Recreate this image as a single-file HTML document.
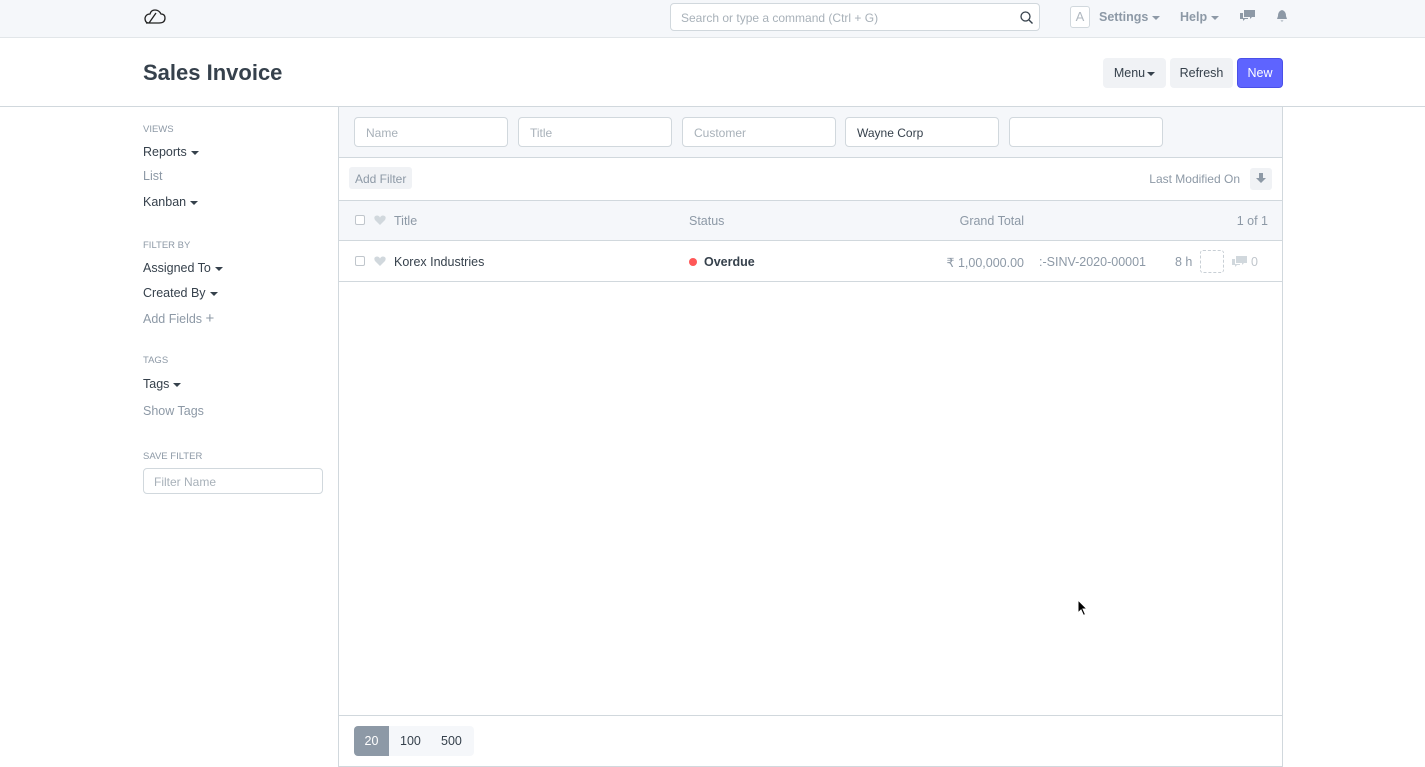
<!DOCTYPE html>
<html><head><meta charset="utf-8"><style>
*{box-sizing:border-box;margin:0;padding:0}
body{width:1425px;height:767px;overflow:hidden;background:#fff;font-family:"Liberation Sans",sans-serif;font-size:12.5px;color:#36414c;position:relative}
.abs{position:absolute;white-space:nowrap}
.nav{top:0;left:0;width:1425px;height:38px;background:#f5f7fa;border-bottom:1px solid #e2e6e9}
.search{left:670px;top:3px;width:370px;height:28px;border:1px solid #d1d8dd;border-radius:4px;background:#fff;font-size:12px;color:#a8b1b9;padding:7px 10px}
.gray{color:#8d99a6}
.caret{display:inline-block;width:0;height:0;border-left:4px solid transparent;border-right:4px solid transparent;border-top:4px solid currentColor;vertical-align:middle;margin-left:4px}
.btn{top:58px;height:30px;border-radius:4px;background:#f0f2f5;font-size:12.5px;padding:8px 0;text-align:center;color:#36414c}
.side{left:143px;font-size:12.5px}
.lbl{font-size:9.5px;color:#8d99a6;left:143px}
.main{left:338px;top:107px;width:945px;height:660px;border:1px solid #d1d8dd;border-top:none}
.inp{top:117px;width:154px;height:30px;border:1px solid #d1d8dd;border-radius:4px;background:#fff;font-size:12px;color:#a8b1b9;padding:8px 11px}
.hline{height:1px;background:#d1d8dd;left:339px;width:943px}
.cb{width:10px;height:10px;border:1px solid #c0c6cc;border-radius:2px}
</style></head><body>
<div class="abs nav"></div>
<svg class="abs" style="left:143px;top:8px" width="25" height="18" viewBox="0 0 25 18"><path d="M3 15 L16 15 Q22 15 22 10 Q22 6 18 6 Q16 2 12 2 Q8 2 7 6 Q3 6 2 10 Q2 15 6 15 M6 15 L13 5" fill="none" stroke="#222" stroke-width="1.3"/></svg>
<div class="abs search">Search or type a command (Ctrl + G)</div>
<svg class="abs" style="left:1020px;top:11px" width="13" height="13"><circle cx="5.5" cy="5.5" r="4.5" fill="none" stroke="#36414c" stroke-width="1.3"/><path d="M9 9 L12.5 12.5" stroke="#36414c" stroke-width="1.4"/></svg>
<div class="abs" style="left:1070px;top:6px;width:20px;height:22px;border:1px solid #d1d8dd;border-radius:3px;background:#fff;color:#b0b8c0;font-size:13px;text-align:center;line-height:20px">A</div>
<div class="abs gray" style="left:1099px;top:10px;font-weight:bold;font-size:12.5px">Settings<span class="caret"></span></div>
<div class="abs gray" style="left:1180px;top:10px;font-weight:bold;font-size:12.5px">Help<span class="caret"></span></div>
<svg class="abs" style="left:1240px;top:10px" width="16" height="13"><path d="M4 0h11v7h-3l-2 2V7H4z M0 3h3v5h5v1H5l-2 2V9H0z" fill="#8d99a6"/></svg>
<svg class="abs" style="left:1276px;top:9px" width="12" height="14"><path d="M6 1 Q2 2 2 7 L1 10 H11 L10 7 Q10 2 6 1z M4.5 11.5 Q6 13.5 7.5 11.5z" fill="#8d99a6"/></svg>

<div class="abs" style="left:143px;top:60px;font-size:22px;font-weight:bold;color:#36414c">Sales Invoice</div>
<div class="abs btn" style="left:1103px;width:63px">Menu<span class="caret" style="margin-left:2px"></span></div>
<div class="abs btn" style="left:1170px;width:63px">Refresh</div>
<div class="abs btn" style="left:1237px;width:46px;background:#5e64ff;color:#fff;border:1px solid #4a50e8;padding-top:7px">New</div>
<div class="abs" style="left:0;top:106px;width:1425px;height:1px;background:#d1d8dd"></div>

<div class="abs lbl" style="top:124px">VIEWS</div>
<div class="abs side" style="top:145px">Reports<span class="caret"></span></div>
<div class="abs side gray" style="top:169px">List</div>
<div class="abs side" style="top:195px">Kanban<span class="caret"></span></div>
<div class="abs lbl" style="top:240px">FILTER BY</div>
<div class="abs side" style="top:261px">Assigned To<span class="caret"></span></div>
<div class="abs side" style="top:286px">Created By<span class="caret"></span></div>
<div class="abs side gray" style="top:310px">Add Fields <span style="font-size:15px">+</span></div>
<div class="abs lbl" style="top:355px">TAGS</div>
<div class="abs side" style="top:377px">Tags<span class="caret"></span></div>
<div class="abs side gray" style="top:404px">Show Tags</div>
<div class="abs lbl" style="top:451px">SAVE FILTER</div>
<div class="abs" style="left:143px;top:468px;width:180px;height:26px;border:1px solid #d1d8dd;border-radius:4px;font-size:12px;color:#a8b1b9;padding:6px 10px">Filter Name</div>

<div class="abs main"></div>
<div class="abs" style="left:339px;top:107px;width:943px;height:50px;background:#f5f7fa"></div>
<div class="abs inp" style="left:354px">Name</div>
<div class="abs inp" style="left:518px">Title</div>
<div class="abs inp" style="left:682px">Customer</div>
<div class="abs inp" style="left:845px;color:#36414c">Wayne Corp</div>
<div class="abs inp" style="left:1009px"></div>
<div class="abs hline" style="top:157px"></div>
<div class="abs" style="left:349px;top:167px;height:22px;padding:5px 6px;background:#f0f2f5;border-radius:3px;font-size:12px;color:#8d99a6">Add Filter</div>
<div class="abs gray" style="right:185px;top:172px;font-size:12px">Last Modified On</div>
<div class="abs" style="left:1250px;top:168px;width:22px;height:22px;background:#f0f2f5;border-radius:3px"></div>
<svg class="abs" style="left:1256px;top:173px" width="10" height="11"><path d="M3 0h4v5h3L5 10 0 5h3z" fill="#8d99a6"/></svg>
<div class="abs hline" style="top:200px"></div>
<div class="abs" style="left:339px;top:201px;width:943px;height:39px;background:#f5f7fa"></div>
<div class="abs cb" style="left:355px;top:215px;background:#fff"></div>
<svg class="abs" style="left:374px;top:215px" width="12" height="11"><path d="M6 10 L1 5 Q-1 1 3 0.5 Q5 0.5 6 2.5 Q7 0.5 9 0.5 Q13 1 11 5z" fill="#d1d8dd"/></svg>
<div class="abs gray" style="left:394px;top:214px">Title</div>
<div class="abs gray" style="left:689px;top:214px">Status</div>
<div class="abs gray" style="right:401px;top:214px">Grand Total</div>
<div class="abs gray" style="right:157px;top:214px">1 of 1</div>
<div class="abs hline" style="top:240px"></div>
<div class="abs cb" style="left:355px;top:256px"></div>
<svg class="abs" style="left:374px;top:256px" width="12" height="11"><path d="M6 10 L1 5 Q-1 1 3 0.5 Q5 0.5 6 2.5 Q7 0.5 9 0.5 Q13 1 11 5z" fill="#d1d8dd"/></svg>
<div class="abs" style="left:394px;top:255px">Korex Industries</div>
<div class="abs" style="left:689px;top:258px;width:8px;height:8px;border-radius:50%;background:#ff5858"></div>
<div class="abs" style="left:704px;top:255px;font-weight:bold">Overdue</div>
<div class="abs gray" style="right:401px;top:255px">₹ 1,00,000.00</div>
<div class="abs gray" style="left:1039px;top:255px;width:110px;overflow:hidden">:-SINV-2020-00001</div>
<div class="abs gray" style="left:1175px;top:255px">8 h</div>
<div class="abs" style="left:1200px;top:250px;width:24px;height:23px;border:1px dashed #c8cfd5;border-radius:3px"></div>
<svg class="abs" style="left:1232px;top:256px" width="15" height="12"><path d="M4 0h11v7h-3l-2 2V7H4z M0 3h3v5h5v1H5l-2 2V9H0z" fill="#d1d8dd"/></svg>
<div class="abs" style="left:1251px;top:255px;color:#c0c6cc">0</div>
<div class="abs hline" style="top:281px"></div>
<div class="abs hline" style="top:715px"></div>
<div class="abs" style="left:354px;top:726px;width:120px;height:30px;background:#f5f7fa;border-radius:4px"></div>
<div class="abs" style="left:354px;top:726px;width:35px;height:30px;background:#8d99a6;border-radius:4px 0 0 4px;color:#fff;text-align:center;line-height:30px">20</div>
<div class="abs" style="left:400px;top:734px">100</div>
<div class="abs" style="left:441px;top:734px">500</div>
<svg class="abs" style="left:1077px;top:599px" width="12" height="18"><path d="M1 1 L1 14 L4 11 L6.5 16.5 L8.5 15.5 L6 10 L10 10 Z" fill="#000" stroke="#fff" stroke-width="1"/></svg>
</body></html>
